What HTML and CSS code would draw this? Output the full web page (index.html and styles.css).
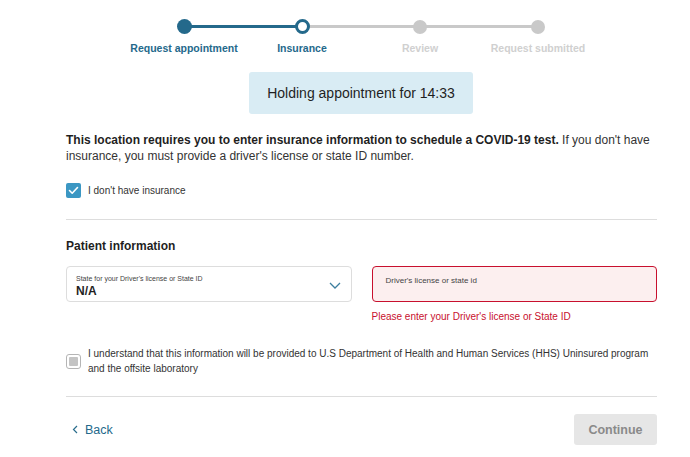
FILE: index.html
```html
<!DOCTYPE html>
<html lang="en">
<head>
    <meta charset="UTF-8">
    <meta name="viewport" content="width=device-width, initial-scale=1.0">
    <title>Insurance - Request appointment</title>
    <link rel="stylesheet" href="styles.css">
</head>
<body>
    <div class="stepper">
        <div class="step done">
            <span class="step-dot"></span>
            <span class="step-label">Request appointment</span>
        </div>
        <div class="step current">
            <span class="step-dot"></span>
            <span class="step-label">Insurance</span>
        </div>
        <div class="step">
            <span class="step-dot"></span>
            <span class="step-label">Review</span>
        </div>
        <div class="step last">
            <span class="step-dot"></span>
            <span class="step-label">Request submitted</span>
        </div>
    </div>

    <div class="holding">Holding appointment for 14:33</div>

    <div class="container">
        <p class="intro"><strong>This location requires you to enter insurance information to schedule a COVID-19 test.</strong> If you don't have insurance, you must provide a driver's license or state ID number.</p>

        <label class="check-row">
            <span class="checkbox checked">
                <svg width="11" height="9" viewBox="0 0 11 9"><path d="M1.5 4.5 L4.2 7.2 L9.5 1.5" fill="none" stroke="#fff" stroke-width="1.6" stroke-linecap="round" stroke-linejoin="round"/></svg>
            </span>
            <span class="check-text">I don't have insurance</span>
        </label>

        <hr class="divider">

        <h2 class="section-title">Patient information</h2>

        <div class="fields">
            <div class="field">
                <div class="select-box">
                    <div class="select-label">State for your Driver's license or State ID</div>
                    <div class="select-value">N/A</div>
                    <svg class="chevron" width="12" height="7" viewBox="0 0 12 7"><path d="M1 1 L6 6 L11 1" fill="none" stroke="#3c7e9e" stroke-width="1.3"/></svg>
                </div>
            </div>
            <div class="field">
                <div class="input-box error">Driver's license or state id</div>
                <div class="error-text">Please enter your Driver's license or State ID</div>
            </div>
        </div>

        <label class="check-row consent">
            <span class="checkbox disabled"><span class="checkbox-inner"></span></span>
            <span class="check-text">I understand that this information will be provided to U.S Department of Health and Human Services (HHS) Uninsured program and the offsite laboratory</span>
        </label>

        <hr class="divider bottom">

        <div class="actions">
            <a href="#" class="back-link">
                <svg width="6" height="9" viewBox="0 0 6 9"><path d="M5 1 L1.5 4.5 L5 8" fill="none" stroke="#2a6d8c" stroke-width="1.2"/></svg>
                Back
            </a>
            <button class="continue-btn" disabled>Continue</button>
        </div>
    </div>
</body>
</html>
```

FILE: styles.css
```css
:root {
    --primary-color: #24698b;
    --check-color: #3b97c3;
    --muted-color: #c9c9c9;
    --text-dark: #1f1f1f;
    --text-body: #333333;
    --border-color: #dddddd;
    --error-color: #c8102e;
    --error-bg: #fcefef;
    --holding-bg: #d9ecf4;
}

* {
    margin: 0;
    padding: 0;
    box-sizing: border-box;
    font-family: 'Liberation Sans', Arial, Helvetica, sans-serif;
}

body {
    background-color: #ffffff;
    color: var(--text-body);
}

/* Progress steps */
.stepper {
    display: flex;
    padding-top: 19px;
    margin-left: 125px;
}

.step {
    position: relative;
    width: 118px;
    display: flex;
    flex-direction: column;
    align-items: center;
}

.step::after {
    content: "";
    position: absolute;
    top: 6px;
    left: 59px;
    width: 118px;
    height: 3px;
    background-color: var(--muted-color);
}

.step.done::after {
    background-color: var(--primary-color);
}

.step.last::after {
    display: none;
}

.step-dot {
    position: relative;
    z-index: 1;
    width: 14px;
    height: 14px;
    margin-top: 1px;
    border-radius: 50%;
    background-color: var(--muted-color);
}

.step.done .step-dot {
    width: 15px;
    height: 15px;
    margin-top: 0;
    background-color: var(--primary-color);
}

.step.current .step-dot {
    width: 15px;
    height: 15px;
    margin-top: 0;
    background-color: #ffffff;
    border: 3px solid var(--primary-color);
}

.step-label {
    margin-top: 7px;
    font-size: 10.5px;
    line-height: 14px;
    font-weight: bold;
    white-space: nowrap;
    color: #d0d0d0;
}

.step.done .step-label,
.step.current .step-label {
    color: var(--primary-color);
}

/* Timer */
.holding {
    width: 224px;
    height: 42px;
    margin: 17px 0 0 249px;
    background-color: var(--holding-bg);
    border-radius: 3px;
    font-size: 14px;
    line-height: 42px;
    text-align: center;
    color: var(--text-dark);
}

.container {
    width: 591px;
    margin-left: 66px;
}

.intro {
    margin-top: 18px;
    font-size: 12px;
    line-height: 16px;
    color: var(--text-body);
}

.intro strong {
    color: var(--text-dark);
}

.check-row {
    display: flex;
    align-items: center;
    gap: 7px;
    margin-top: 19px;
}

.checkbox {
    flex-shrink: 0;
    width: 15px;
    height: 15px;
    border-radius: 2px;
    display: flex;
    align-items: center;
    justify-content: center;
}

.checkbox.checked {
    background-color: var(--check-color);
}

.checkbox.disabled {
    border: 1px solid #b5b5b5;
    border-radius: 3px;
}

.checkbox-inner {
    width: 9px;
    height: 9px;
    background-color: #c4c4c4;
    border-radius: 1px;
}

.check-text {
    font-size: 10px;
    line-height: 15px;
    color: var(--text-body);
}

.divider {
    border: none;
    border-top: 1px solid var(--border-color);
    margin-top: 21px;
}

.section-title {
    margin-top: 18px;
    font-size: 12px;
    line-height: 16px;
    font-weight: bold;
    color: var(--text-dark);
}

.fields {
    display: flex;
    gap: 20px;
    margin-top: 12px;
}

.field {
    flex: 1;
}

.select-box {
    position: relative;
    height: 36px;
    border: 1px solid var(--border-color);
    border-radius: 4px;
    padding: 7px 9px 0;
}

.select-label {
    font-size: 7px;
    line-height: 10px;
    color: #444;
}

.select-value {
    font-size: 12px;
    line-height: 15px;
    font-weight: bold;
    color: var(--text-dark);
}

.chevron {
    position: absolute;
    top: 15px;
    right: 10px;
}

.input-box {
    height: 36px;
    border-radius: 4px;
    padding: 9px 13px 0;
    font-size: 8px;
    line-height: 10px;
    color: #444;
}

.input-box.error {
    background-color: var(--error-bg);
    border: 1px solid var(--error-color);
}

.error-text {
    margin-top: 8px;
    font-size: 10px;
    line-height: 14px;
    color: var(--error-color);
}

.check-row.consent {
    margin-top: 22px;
}

.divider.bottom {
    margin-top: 20px;
}

.actions {
    display: flex;
    justify-content: space-between;
    align-items: center;
    margin-top: 17px;
}

.back-link {
    display: flex;
    align-items: center;
    gap: 7px;
    padding-left: 6px;
    font-size: 12.5px;
    color: var(--primary-color);
    text-decoration: none;
}

.continue-btn {
    width: 83px;
    height: 31px;
    background-color: #e6e6e6;
    color: #8a8a8a;
    border: none;
    border-radius: 3px;
    font-size: 12.5px;
    font-weight: bold;
}
```
